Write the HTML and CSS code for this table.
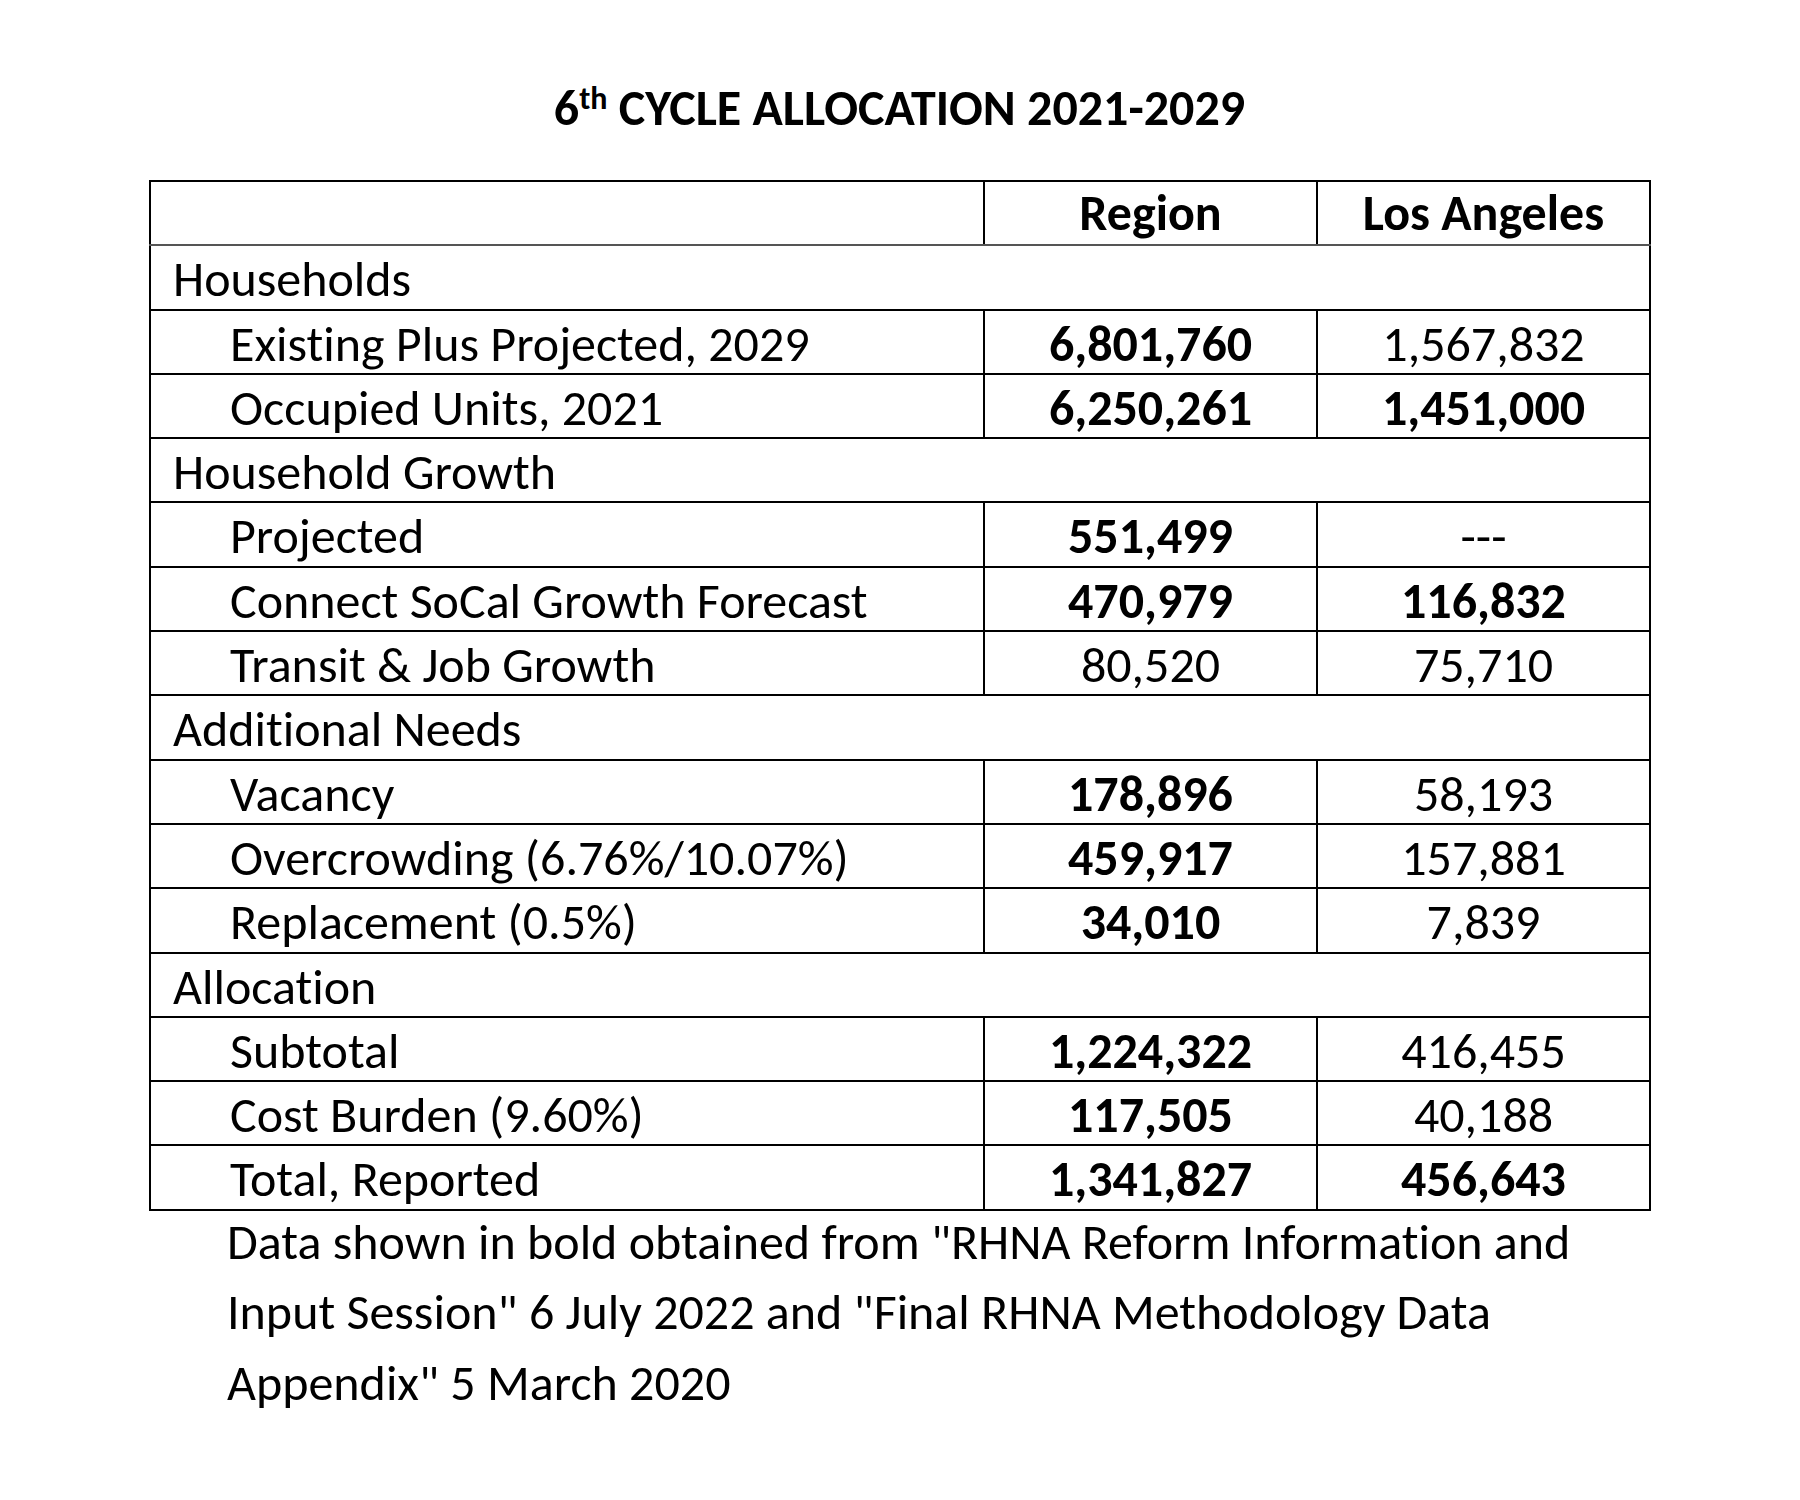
FILE: index.html
```html
<!DOCTYPE html>
<html lang="en">
<head>
<meta charset="utf-8">
<title>6th Cycle Allocation 2021-2029</title>
<link rel="stylesheet" href="styles.css">
</head>
<body>
<div class="page">
  <h1 class="title">6<sup>th</sup> CYCLE ALLOCATION 2021-2029</h1>
  <table class="alloc">
    <colgroup>
      <col class="c-label">
      <col class="c-num">
      <col class="c-num">
    </colgroup>
    <thead>
      <tr class="head">
        <th></th>
        <th>Region</th>
        <th>Los Angeles</th>
      </tr>
    </thead>
    <tbody>
      <tr class="section"><td colspan="3">Households</td></tr>
      <tr><td class="item">Existing Plus Projected, 2029</td><td class="num b">6,801,760</td><td class="num">1,567,832</td></tr>
      <tr><td class="item">Occupied Units, 2021</td><td class="num b">6,250,261</td><td class="num b">1,451,000</td></tr>
      <tr class="section"><td colspan="3">Household Growth</td></tr>
      <tr><td class="item">Projected</td><td class="num b">551,499</td><td class="num">---</td></tr>
      <tr><td class="item">Connect SoCal Growth Forecast</td><td class="num b">470,979</td><td class="num b">116,832</td></tr>
      <tr><td class="item">Transit &amp; Job Growth</td><td class="num">80,520</td><td class="num">75,710</td></tr>
      <tr class="section"><td colspan="3">Additional Needs</td></tr>
      <tr><td class="item">Vacancy</td><td class="num b">178,896</td><td class="num">58,193</td></tr>
      <tr><td class="item">Overcrowding (6.76%/10.07%)</td><td class="num b">459,917</td><td class="num">157,881</td></tr>
      <tr><td class="item">Replacement (0.5%)</td><td class="num b">34,010</td><td class="num">7,839</td></tr>
      <tr class="section"><td colspan="3">Allocation</td></tr>
      <tr><td class="item">Subtotal</td><td class="num b">1,224,322</td><td class="num">416,455</td></tr>
      <tr><td class="item">Cost Burden (9.60%)</td><td class="num b">117,505</td><td class="num">40,188</td></tr>
      <tr><td class="item">Total, Reported</td><td class="num b">1,341,827</td><td class="num b">456,643</td></tr>
    </tbody>
  </table>
  <p class="note">Data shown in bold obtained from "RHNA Reform Information and<br>Input Session" 6 July 2022 and "Final RHNA Methodology Data<br>Appendix" 5 March 2020</p>
</div>
</body>
</html>
```
FILE: styles.css
```css
html, body {
  margin: 0;
  padding: 0;
  background: #ffffff;
}

body {
  font-family: Carlito, Calibri, "Liberation Sans", sans-serif;
  font-variant-ligatures: none;
  color: #000000;
}

.page {
  width: 1501px;
  margin-left: 149px;
  padding-top: 77px;
}

.title {
  margin: 0 0 42px 0;
  font-size: 50px;
  font-weight: 700;
  line-height: 61px;
  text-align: center;
}

.title sup {
  font-size: 32px;
  line-height: 0;
  vertical-align: 16px;
}

.alloc {
  width: 1501px;
  border-collapse: collapse;
  table-layout: fixed;
  border: 2px solid #000000;
  font-size: 50px;
}

.c-label { width: 834px; }
.c-num { width: 333px; }

.alloc th,
.alloc td {
  height: 64.3px;
  box-sizing: border-box;
  padding: 8px 0 0 0;
  line-height: 50px;
  vertical-align: top;
  border: 2px solid #000000;
  white-space: nowrap;
}

.alloc th {
  font-weight: 700;
  text-align: center;
  padding-top: 6px;
}

.head th {
  border-bottom-color: #555555;
}

.section td {
  padding-left: 22px;
  text-align: left;
}

.item {
  padding-left: 79px !important;
  text-align: left;
}

.num {
  text-align: center;
}

.b {
  font-weight: 700;
}

.note {
  margin: -4px 0 0 0;
  padding-left: 78px;
  font-size: 50px;
  line-height: 70.5px;
}
```
